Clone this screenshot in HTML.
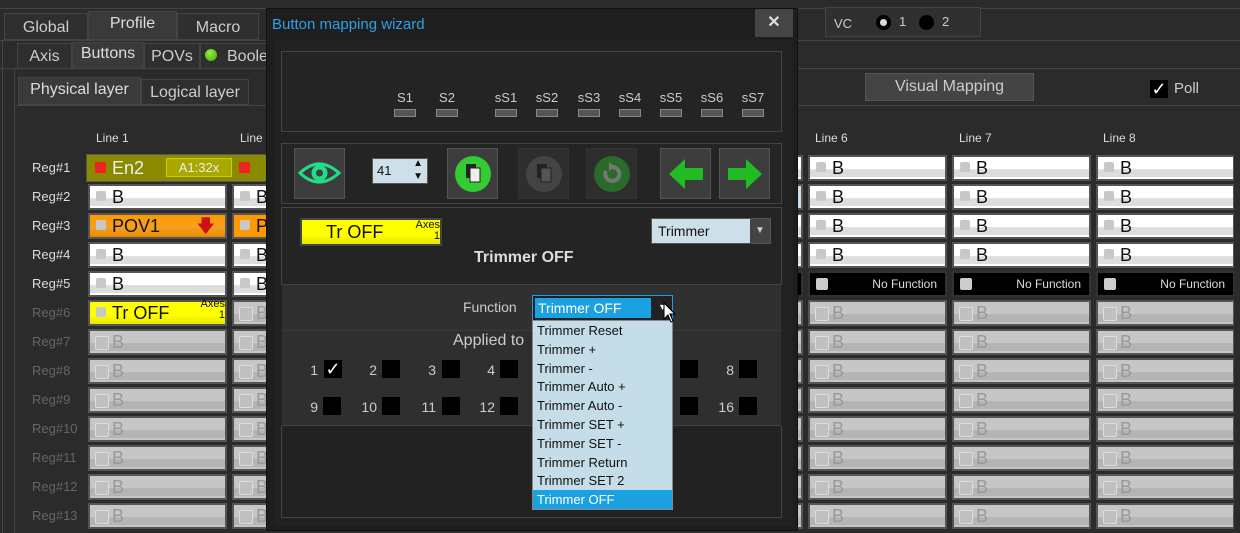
<!DOCTYPE html>
<html><head><meta charset="utf-8"><style>
*{margin:0;padding:0;box-sizing:border-box}
body{width:1240px;height:533px;background:#2b2b2b;font-family:"Liberation Sans",sans-serif;position:relative;overflow:hidden;color:#ddd}
.a{position:absolute}
.tab{position:absolute;background:#2f2f2f;border:1px solid #444;color:#ccc;font-size:16px;text-align:center}
.rl{position:absolute;left:32px;font-size:13px;color:#ddd}
.rl.d{color:#666}
.c{position:absolute;height:26px;width:139px;border:2px solid #555;background:linear-gradient(#fff 0,#fff 55%,#ddd 56%,#ddd 90%,#fff 91%);color:#111;font-size:18px;line-height:22px;padding-left:22px}
.c:before{content:"";position:absolute;left:6px;top:5px;width:10px;height:10px;background:#c8c8c8;border-radius:2px}
.c.g{background:linear-gradient(#c6c6c6 0,#c6c6c6 55%,#b4b4b4 56%,#b4b4b4 90%,#c6c6c6 91%);color:#999;border-color:#555}
.c.g:before{background:#c0c0c0;border:1px solid #ddd;width:12px;height:12px;top:5px;left:5px}
.c.k{background:#000;color:#ddd;font-size:12px;text-align:right;padding-right:8px;line-height:22px;border-color:#333}
.c.k:before{background:#ccc;width:12px;height:12px;top:5px;left:6px}
.s{position:absolute;font-size:13px;color:#ccc;width:30px;text-align:center}
.sm{position:absolute;width:22px;height:8px;background:#555;border:1px solid #888}
.bt{position:absolute;top:148px;width:51px;height:51px;background:#3d3d3d;border:1px solid #555}
.cb{position:absolute;width:18px;height:18px;background:#000}
.cn{position:absolute;font-size:14px;color:#ccc;text-align:right;width:20px}
.dd div{height:18.8px;padding-left:4px;font-size:13px;color:#111;line-height:19px}
</style></head><body>
<div class="a" style="left:0;top:0;width:1240px;height:9px;background:#2b2b2b;border-bottom:1px solid #444"></div>
<div class="tab" style="left:4px;top:13px;width:84px;height:27px;line-height:27px">Global</div>
<div class="tab" style="left:88px;top:11px;width:89px;height:29px;background:#3a3a3a;line-height:24px;color:#ddd">Profile</div>
<div class="tab" style="left:177px;top:13px;width:82px;height:27px;line-height:27px">Macro</div>
<div class="a" style="left:0;top:40px;width:1240px;height:1px;background:#444"></div>
<div class="a" style="left:2px;top:40px;width:1px;height:493px;background:#444"></div>
<div class="tab" style="left:17px;top:43px;width:55px;height:26px;line-height:26px">Axis</div>
<div class="tab" style="left:72px;top:42px;width:72px;height:27px;background:#3a3a3a;line-height:22px;color:#ddd">Buttons</div>
<div class="tab" style="left:144px;top:43px;width:56px;height:26px;line-height:26px">POVs</div>
<div class="tab" style="left:200px;top:43px;width:70px;height:26px;line-height:26px;text-align:left;padding-left:26px">Boole</div>
<div class="a" style="left:205px;top:49px;width:12px;height:12px;border-radius:50%;background:radial-gradient(circle at 40% 35%,#9e4,#3a0)"></div>
<div class="a" style="left:0;top:68px;width:1240px;height:1px;background:#444"></div>
<div class="a" style="left:14px;top:69px;width:1px;height:464px;background:#444"></div>
<div class="tab" style="left:18px;top:77px;width:123px;height:28px;background:#3a3a3a;line-height:24px;color:#ddd">Physical layer</div>
<div class="tab" style="left:141px;top:79px;width:108px;height:26px;line-height:26px">Logical layer</div>
<div class="a" style="left:14px;top:105px;width:1226px;height:1px;background:#444"></div>
<div class="a" style="left:825px;top:7px;width:156px;height:30px;border:1px solid #444;background:#303030"></div>
<div class="a" style="left:834px;top:16px;font-size:13px;color:#ccc">VC</div>
<div class="a" style="left:876px;top:15px;width:15px;height:15px;border-radius:50%;background:#000"><div style="margin:4px;width:7px;height:7px;border-radius:50%;background:#ddd"></div></div>
<div class="a" style="left:899px;top:14px;font-size:13px;color:#ccc">1</div>
<div class="a" style="left:919px;top:15px;width:15px;height:15px;border-radius:50%;background:#000"></div>
<div class="a" style="left:942px;top:14px;font-size:13px;color:#ccc">2</div>
<div class="a" style="left:865px;top:73px;width:169px;height:28px;background:#444;border:1px solid #555;color:#ccc;font-size:16px;text-align:center;line-height:26px">Visual Mapping</div>
<div class="a" style="left:1150px;top:80px;width:18px;height:18px;background:#000;color:#fff;font-size:18px;line-height:18px;text-align:center">✓</div>
<div class="a" style="left:1174px;top:80px;font-size:15px;color:#ccc">Poll</div>
<div class="a" style="left:96px;top:131px;font-size:12px;color:#ddd">Line 1</div>
<div class="a" style="left:240px;top:131px;font-size:12px;color:#ddd">Line</div>
<div class="a" style="left:815px;top:131px;font-size:12px;color:#ddd">Line 6</div>
<div class="a" style="left:959px;top:131px;font-size:12px;color:#ddd">Line 7</div>
<div class="a" style="left:1103px;top:131px;font-size:12px;color:#ddd">Line 8</div>
<div class="rl" style="top:160px">Reg#1</div><div class="rl" style="top:189px">Reg#2</div><div class="rl" style="top:218px">Reg#3</div><div class="rl" style="top:247px">Reg#4</div><div class="rl" style="top:276px">Reg#5</div>
<div class="rl d" style="top:305px">Reg#6</div><div class="rl d" style="top:334px">Reg#7</div><div class="rl d" style="top:363px">Reg#8</div><div class="rl d" style="top:392px">Reg#9</div><div class="rl d" style="top:421px">Reg#10</div><div class="rl d" style="top:450px">Reg#11</div><div class="rl d" style="top:479px">Reg#12</div><div class="rl d" style="top:508px">Reg#13</div>
<div class="a" style="left:86px;top:154px;width:200px;height:28px;background:#8a8a00;border:1px solid #555"></div>
<div class="a" style="left:95px;top:162px;width:11px;height:11px;background:#e22"></div>
<div class="a" style="left:112px;top:158px;font-size:18px;color:#eee">En2</div>
<div class="a" style="left:166px;top:158px;width:66px;height:19px;background:#a8a800;border:1px solid #cc0;color:#eee;font-size:13px;text-align:center;line-height:17px">A1:32x</div>
<div class="a" style="left:239px;top:162px;width:11px;height:11px;background:#e22"></div>
<div class="c" style="left:88px;top:184px">B</div><div class="c" style="left:232px;top:184px">B</div>
<div class="c" style="left:88px;top:213px;background:linear-gradient(#f90,#f5a020 55%,#e88a00);">POV1<span style="position:absolute;right:10px;top:0;color:#c11">🡇</span></div>
<div class="c" style="left:232px;top:213px;background:#f90">P</div>
<div class="c" style="left:88px;top:242px">B</div><div class="c" style="left:232px;top:242px">B</div>
<div class="c" style="left:88px;top:271px">B</div><div class="c" style="left:232px;top:271px">B</div>
<div class="c" style="left:88px;top:300px;background:linear-gradient(#ff0,#ff0 60%,#e6e600)">Tr OFF<span style="position:absolute;right:0;top:-3px;font-size:11px;line-height:11px;text-align:right">Axes<br>1</span></div>
<div class="c g" style="left:232px;top:300px">B</div>
<div class="c g" style="left:88px;top:329px">B</div><div class="c g" style="left:232px;top:329px">B</div>
<div class="c g" style="left:88px;top:358px">B</div><div class="c g" style="left:232px;top:358px">B</div>
<div class="c g" style="left:88px;top:387px">B</div><div class="c g" style="left:232px;top:387px">B</div>
<div class="c g" style="left:88px;top:416px">B</div><div class="c g" style="left:232px;top:416px">B</div>
<div class="c g" style="left:88px;top:445px">B</div><div class="c g" style="left:232px;top:445px">B</div>
<div class="c g" style="left:88px;top:474px">B</div><div class="c g" style="left:232px;top:474px">B</div>
<div class="c g" style="left:88px;top:503px">B</div><div class="c g" style="left:232px;top:503px">B</div>
<div class="c" style="left:664px;top:155px">B</div><div class="c" style="left:808px;top:155px">B</div><div class="c" style="left:952px;top:155px">B</div><div class="c" style="left:1096px;top:155px">B</div>
<div class="c" style="left:664px;top:184px;background:#cde">B</div><div class="c" style="left:808px;top:184px">B</div><div class="c" style="left:952px;top:184px">B</div><div class="c" style="left:1096px;top:184px">B</div>
<div class="c" style="left:664px;top:213px">B</div><div class="c" style="left:808px;top:213px">B</div><div class="c" style="left:952px;top:213px">B</div><div class="c" style="left:1096px;top:213px">B</div>
<div class="c" style="left:664px;top:242px">B</div><div class="c" style="left:808px;top:242px">B</div><div class="c" style="left:952px;top:242px">B</div><div class="c" style="left:1096px;top:242px">B</div>
<div class="c k" style="left:664px;top:271px"></div><div class="c k" style="left:808px;top:271px">No Function</div><div class="c k" style="left:952px;top:271px">No Function</div><div class="c k" style="left:1096px;top:271px">No Function</div>
<div class="c g" style="left:664px;top:300px">B</div><div class="c g" style="left:808px;top:300px">B</div><div class="c g" style="left:952px;top:300px">B</div><div class="c g" style="left:1096px;top:300px">B</div>
<div class="c g" style="left:664px;top:329px">B</div><div class="c g" style="left:808px;top:329px">B</div><div class="c g" style="left:952px;top:329px">B</div><div class="c g" style="left:1096px;top:329px">B</div>
<div class="c g" style="left:664px;top:358px">B</div><div class="c g" style="left:808px;top:358px">B</div><div class="c g" style="left:952px;top:358px">B</div><div class="c g" style="left:1096px;top:358px">B</div>
<div class="c g" style="left:664px;top:387px">B</div><div class="c g" style="left:808px;top:387px">B</div><div class="c g" style="left:952px;top:387px">B</div><div class="c g" style="left:1096px;top:387px">B</div>
<div class="c g" style="left:664px;top:416px">B</div><div class="c g" style="left:808px;top:416px">B</div><div class="c g" style="left:952px;top:416px">B</div><div class="c g" style="left:1096px;top:416px">B</div>
<div class="c g" style="left:664px;top:445px">B</div><div class="c g" style="left:808px;top:445px">B</div><div class="c g" style="left:952px;top:445px">B</div><div class="c g" style="left:1096px;top:445px">B</div>
<div class="c g" style="left:664px;top:474px">B</div><div class="c g" style="left:808px;top:474px">B</div><div class="c g" style="left:952px;top:474px">B</div><div class="c g" style="left:1096px;top:474px">B</div>
<div class="c g" style="left:664px;top:503px">B</div><div class="c g" style="left:808px;top:503px">B</div><div class="c g" style="left:952px;top:503px">B</div><div class="c g" style="left:1096px;top:503px">B</div>
<div class="a" style="left:1234px;top:106px;width:6px;height:427px;background:#2b2b2b"></div>

<div class="a" style="left:266px;top:8px;width:532px;height:523px;background:#1e1e1e;border:1px solid #111"></div>
<div class="a" style="left:272px;top:16px;font-size:15px;color:#2ea0e6">Button mapping wizard</div>
<div class="a" style="left:755px;top:9px;width:38px;height:28px;background:#454545;color:#ddd;font-size:16px;text-align:center;line-height:28px;font-weight:bold">✕</div>
<div class="a" style="left:275px;top:40px;width:518px;height:486px;background:#222"></div>
<div class="a" style="left:281px;top:51px;width:501px;height:81px;border:1px solid #444;background:#242424"></div>
<div class="s" style="left:390px;top:90px">S1</div><div class="s" style="left:432px;top:90px">S2</div>
<div class="s" style="left:491px;top:90px">sS1</div><div class="s" style="left:532px;top:90px">sS2</div><div class="s" style="left:574px;top:90px">sS3</div><div class="s" style="left:615px;top:90px">sS4</div><div class="s" style="left:656px;top:90px">sS5</div><div class="s" style="left:697px;top:90px">sS6</div><div class="s" style="left:738px;top:90px">sS7</div>
<div class="sm" style="left:394px;top:109px"></div><div class="sm" style="left:436px;top:109px"></div><div class="sm" style="left:495px;top:109px"></div><div class="sm" style="left:536px;top:109px"></div><div class="sm" style="left:578px;top:109px"></div><div class="sm" style="left:619px;top:109px"></div><div class="sm" style="left:660px;top:109px"></div><div class="sm" style="left:701px;top:109px"></div><div class="sm" style="left:742px;top:109px"></div>
<div class="a" style="left:281px;top:143px;width:501px;height:61px;border:1px solid #444;background:#242424"></div>
<div class="bt" style="left:294px"><svg width="49" height="49" viewBox="0 0 49 49"><path d="M5 24 Q24 6 44 24 Q24 42 5 24Z" fill="none" stroke="#2d8" stroke-width="3"/><circle cx="24.5" cy="24" r="8" fill="#2d8"/><circle cx="24.5" cy="24" r="3.5" fill="#3d3d3d"/></svg></div>
<div class="a" style="left:372px;top:158px;width:56px;height:26px;background:#cde0ea;border:1px solid #555;color:#111;font-size:13px;line-height:24px;padding-left:4px">41<span style="position:absolute;right:4px;top:-2px;font-size:10px;line-height:13px">▲<br>▼</span></div>
<div class="bt" style="left:447px"><svg width="49" height="49"><circle cx="25" cy="25" r="18" fill="#3c3"/><rect x="18" y="15" width="10" height="14" fill="#222"/><rect x="22" y="19" width="10" height="14" fill="#eee" stroke="#222"/></svg></div>
<div class="bt" style="left:518px;background:#2e2e2e;border-color:#333"><svg width="49" height="49"><circle cx="25" cy="25" r="18" fill="#444"/><rect x="18" y="15" width="10" height="14" fill="#222"/><rect x="22" y="19" width="10" height="14" fill="#555" stroke="#222"/></svg></div>
<div class="bt" style="left:586px;background:#2e2e2e;border-color:#333"><svg width="49" height="49"><circle cx="25" cy="25" r="18" fill="#2a6a2a"/><path d="M19 22 A7 7 0 1 0 25 18" fill="none" stroke="#777" stroke-width="4"/><path d="M22 13 L28 18 L22 22Z" fill="#777"/></svg></div>
<div class="bt" style="left:660px"><svg width="49" height="49"><path d="M8 25 L24 10 L24 19 L42 19 L42 31 L24 31 L24 40Z" fill="#2b2"/></svg></div>
<div class="bt" style="left:719px"><svg width="49" height="49"><path d="M42 25 L26 10 L26 19 L8 19 L8 31 L26 31 L26 40Z" fill="#2b2"/></svg></div>
<div class="a" style="left:281px;top:207px;width:501px;height:78px;border:1px solid #444;background:#242424"></div>
<div class="a" style="left:300px;top:218px;width:142px;height:28px;background:linear-gradient(#ff0,#ff0 60%,#e6e600);border:2px solid #444;color:#111;font-size:18px;line-height:24px;padding-left:24px">Tr OFF<span style="position:absolute;right:0;top:0;font-size:11px;line-height:11px;text-align:right">Axes<br>1</span></div>
<div class="a" style="left:651px;top:218px;width:120px;height:26px;background:#cde0ea;border:1px solid #555;color:#111;font-size:14px;line-height:24px;padding-left:6px">Trimmer<div style="position:absolute;right:0;top:0;width:20px;height:24px;background:#444;color:#ccc;font-size:10px;text-align:center">▼</div></div>
<div class="a" style="left:474px;top:249px;font-size:16px;font-weight:bold;color:#ddd">Trimmer OFF</div>
<div class="a" style="left:282px;top:284px;width:499px;height:46px;background:#303030;border-top:1px solid #444"></div>
<div class="a" style="left:463px;top:299px;font-size:14px;color:#ccc">Function</div>
<div class="a" style="left:532px;top:295px;width:141px;height:26px;border:1px solid #1ba1e2;background:#222"><div style="margin:2px;width:116px;height:20px;background:#1ba1e2;color:#fff;font-size:14px;line-height:20px;padding-left:3px">Trimmer OFF</div><div style="position:absolute;right:5px;top:6px;color:#fff;font-size:9px">▼</div></div>
<div class="a" style="left:282px;top:330px;width:499px;height:96px;background:#2f2f2f;border-top:1px solid #3a3a3a;border-bottom:1px solid #444"></div>
<div class="a" style="left:453px;top:332px;font-size:16px;color:#ccc">Applied to</div>
<div class="cn" style="left:298px;top:362px">1</div><div class="cb" style="left:324px;top:360px;color:#fff;font-size:18px;line-height:18px;text-align:center">✓</div>
<div class="cn" style="left:357px;top:362px">2</div><div class="cb" style="left:382px;top:360px"></div>
<div class="cn" style="left:416px;top:362px">3</div><div class="cb" style="left:442px;top:360px"></div>
<div class="cn" style="left:475px;top:362px">4</div><div class="cb" style="left:500px;top:360px"></div>
<div class="cb" style="left:680px;top:360px"></div>
<div class="cn" style="left:714px;top:362px">8</div><div class="cb" style="left:739px;top:360px"></div>
<div class="cn" style="left:298px;top:399px">9</div><div class="cb" style="left:323px;top:397px"></div>
<div class="cn" style="left:357px;top:399px">10</div><div class="cb" style="left:382px;top:397px"></div>
<div class="cn" style="left:416px;top:399px">11</div><div class="cb" style="left:442px;top:397px"></div>
<div class="cn" style="left:475px;top:399px">12</div><div class="cb" style="left:500px;top:397px"></div>
<div class="cb" style="left:680px;top:397px"></div>
<div class="cn" style="left:714px;top:399px">16</div><div class="cb" style="left:739px;top:397px"></div>
<div class="a" style="left:281px;top:426px;width:501px;height:92px;border:1px solid #444;border-top:none;background:#222"></div>
<div class="a dd" style="left:532px;top:320px;width:141px;height:190px;background:#c5dde8;border:1px solid #888">
<div>Trimmer Reset</div><div>Trimmer +</div><div>Trimmer -</div><div>Trimmer Auto +</div><div>Trimmer Auto -</div><div>Trimmer SET +</div><div>Trimmer SET -</div><div>Trimmer Return</div><div>Trimmer SET 2</div><div style="background:#1ba1e2;color:#fff">Trimmer OFF</div></div>
<svg class="a" style="left:663px;top:302px" width="14" height="22"><path d="M1 1 L1 17 L5 13 L8 20 L10 19 L7 12 L12 12Z" fill="#fff" stroke="#000"/></svg>
</body></html>
